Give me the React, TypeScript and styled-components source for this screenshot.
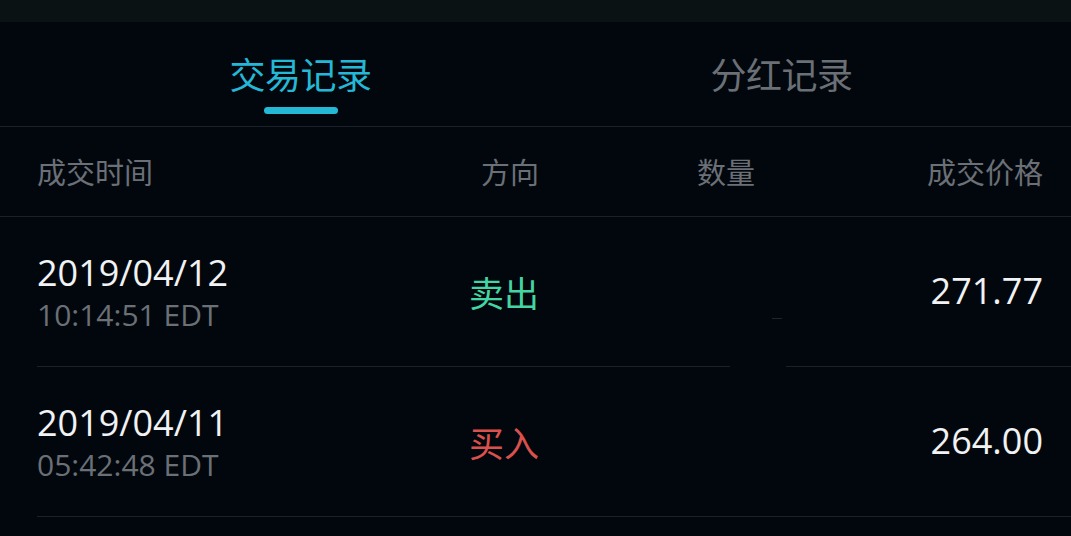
import styled, { createGlobalStyle } from "styled-components";

const GlobalStyle = createGlobalStyle`
  html, body {
    margin: 0;
    padding: 0;
    background: #02070d;
  }
  body {
    font-family: "Open Sans", "Noto Sans CJK SC", sans-serif;
    -webkit-font-smoothing: antialiased;
  }
`;

const Page = styled.div`
  width: 1071px;
  height: 536px;
  overflow: hidden;
  background: #02070d;
  display: flex;
  flex-direction: column;
`;

const TopBar = styled.div`
  height: 22px;
  background: #0b1214;
  flex-shrink: 0;
`;

const Tabs = styled.div`
  height: 104px;
  display: flex;
  padding-left: 60px;
  border-bottom: 1px solid #1a2129;
  flex-shrink: 0;
`;

const Tab = styled.div<{ $active?: boolean }>`
  width: 481px;
  display: flex;
  flex-direction: column;
  align-items: center;
  padding-top: 29px;
  font-family: "Noto Sans CJK SC", sans-serif;
  font-size: 36px;
  line-height: 44px;
  color: ${(p) => (p.$active ? "#25b8d6" : "#6b7077")};
  letter-spacing: -0.5px;

  &::after {
    content: "";
    display: ${(p) => (p.$active ? "block" : "none")};
    width: 74px;
    height: 7px;
    border-radius: 4px;
    background: #25b8d6;
    margin-top: 12px;
  }
`;

const Grid = styled.div`
  display: grid;
  grid-template-columns: 382px 120px 216px 288px;
  align-items: center;
`;

const Header = styled(Grid)`
  height: 89px;
  padding: 0 28px 0 37px;
  border-bottom: 1px solid #1a2129;
  font-family: "Noto Sans CJK SC", sans-serif;
  font-size: 29px;
  color: #6b7077;
  flex-shrink: 0;
`;

const HeadCell = styled.div<{ $right?: boolean }>`
  text-align: ${(p) => (p.$right ? "right" : "left")};
  padding-bottom: 2px;
`;

const Row = styled(Grid)`
  position: relative;
  height: 149px;
  margin-left: 37px;
  padding-right: 28px;
  border-bottom: 1px solid #1a2129;
  flex-shrink: 0;
`;

const DateCell = styled.div`
  display: flex;
  flex-direction: column;
  padding-top: 4px;
`;

const DateText = styled.div`
  font-size: 36px;
  line-height: 42px;
  color: #f1f2f3;
`;

const TimeText = styled.div`
  font-size: 30px;
  line-height: 42px;
  color: #6b7077;
`;

const Side = styled.div<{ $buy?: boolean }>`
  text-align: right;
  font-family: "Noto Sans CJK SC", sans-serif;
  font-size: 35px;
  color: ${(p) => (p.$buy ? "#da504c" : "#43d6a2")};
  padding-bottom: 0;
`;

const Qty = styled.div``;

const Price = styled.div`
  text-align: right;
  font-size: 36px;
  color: #f1f2f3;
  padding-bottom: 2px;
`;

// hidden quantity patch lying over the divider line
const Mask = styled.div`
  position: absolute;
  left: 693px;
  width: 56px;
  top: 102px;
  height: 49px;
  background: #02070d;
`;

const MaskEdge = styled.div`
  position: absolute;
  left: 735px;
  width: 10px;
  top: 101px;
  height: 1px;
  background: #1e252c;
`;

type Trade = {
  date: string;
  time: string;
  buy: boolean;
  price: string;
};

const trades: Trade[] = [
  { date: "2019/04/12", time: "10:14:51 EDT", buy: false, price: "271.77" },
  { date: "2019/04/11", time: "05:42:48 EDT", buy: true, price: "264.00" },
];

export default function App() {
  return (
    <Page>
      <GlobalStyle />
      <TopBar />
      <Tabs>
        <Tab $active>交易记录</Tab>
        <Tab>分红记录</Tab>
      </Tabs>
      <Header>
        <HeadCell>成交时间</HeadCell>
        <HeadCell $right>方向</HeadCell>
        <HeadCell $right>数量</HeadCell>
        <HeadCell $right>成交价格</HeadCell>
      </Header>
      {trades.map((t, i) => (
        <Row key={t.date}>
          <DateCell>
            <DateText>{t.date}</DateText>
            <TimeText>{t.time}</TimeText>
          </DateCell>
          <Side $buy={t.buy}>{t.buy ? "买入" : "卖出"}</Side>
          <Qty />
          <Price>{t.price}</Price>
          {i === 0 && (
            <>
              <Mask />
              <MaskEdge />
            </>
          )}
        </Row>
      ))}
    </Page>
  );
}
